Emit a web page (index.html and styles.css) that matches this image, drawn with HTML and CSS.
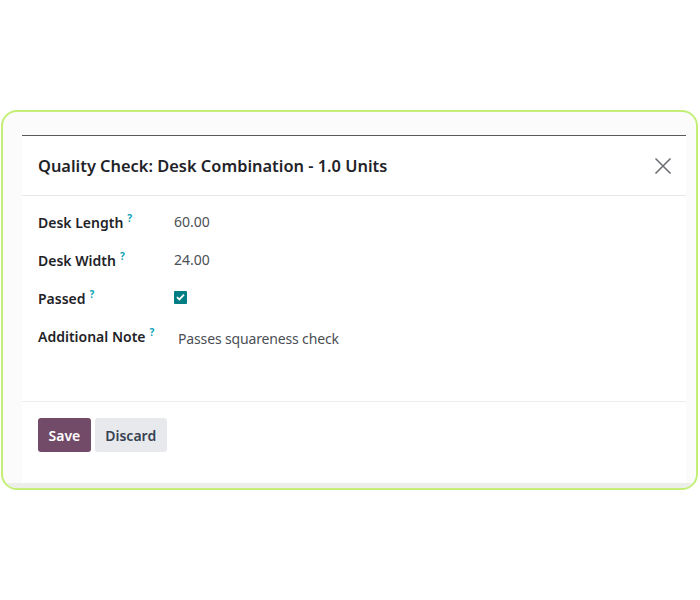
FILE: index.html
```html
<!DOCTYPE html>
<html lang="en">
<head>
    <meta charset="UTF-8">
    <title>Quality Check</title>
    <link rel="stylesheet" href="styles.css">
</head>
<body>

    <div class="frame">
        <div class="modal">

            <!-- Header -->
            <div class="modal-header">
                <h4 class="modal-title">Quality Check: Desk Combination - 1.0 Units</h4>
                <button class="btn-close" aria-label="Close">
                    <svg width="18" height="18" viewBox="0 0 18 18">
                        <path d="M1.5 1.5 L16.5 16.5 M16.5 1.5 L1.5 16.5" stroke="#6c6f73" stroke-width="1.6" fill="none"/>
                    </svg>
                </button>
            </div>

            <!-- Body -->
            <div class="modal-body">
                <div class="field-row">
                    <label class="field-label">Desk Length<sup>?</sup></label>
                    <span class="field-value">60.00</span>
                </div>
                <div class="field-row">
                    <label class="field-label">Desk Width<sup>?</sup></label>
                    <span class="field-value">24.00</span>
                </div>
                <div class="field-row">
                    <label class="field-label">Passed<sup>?</sup></label>
                    <span class="field-value">
                        <span class="checkbox">
                            <svg width="9" height="8" viewBox="0 0 9 8">
                                <path d="M1 4.2 L3.4 6.4 L8 1.6" stroke="#fff" stroke-width="1.8" fill="none"/>
                            </svg>
                        </span>
                    </span>
                </div>
                <div class="field-row">
                    <label class="field-label">Additional Note<sup>?</sup></label>
                    <span class="field-value note">Passes squareness check</span>
                </div>
            </div>

            <!-- Footer -->
            <div class="modal-footer">
                <button class="btn btn-primary">Save</button>
                <button class="btn btn-secondary">Discard</button>
            </div>

        </div>
        <div class="frame-bottom"></div>
    </div>

</body>
</html>
```

FILE: styles.css
```css
body {
    margin: 0;
    padding: 0;
    background-color: #ffffff;
    font-family: "Noto Sans", "Open Sans", sans-serif;
    color: #374151;
}

/* Green rounded frame around the dialog */
.frame {
    box-sizing: border-box;
    margin: 110px 2px 0 1px;
    height: 380px;
    border: 2px solid #c4ee78;
    border-radius: 16px;
    background-color: #fbfbfb;
    padding: 23px 10px 0 19px;
    display: flex;
    flex-direction: column;
    overflow: hidden;
}

.frame-bottom {
    margin: 0 -10px 0 -19px;
    height: 5px;
    background-color: #eceeea;
}

/* Dialog */
.modal {
    flex: 1;
    background-color: #ffffff;
    border-top: 1px solid #5a5a5a;
    display: flex;
    flex-direction: column;
}

.modal-header {
    display: flex;
    align-items: center;
    justify-content: space-between;
    height: 59px;
    padding: 0 14px 0 16px;
    border-bottom: 1px solid #e7e7e7;
}

.modal-title {
    margin: 0;
    font-size: 16.4px;
    font-weight: 600;
    color: #1f2328;
}

.btn-close {
    border: none;
    background: none;
    padding: 0;
    cursor: pointer;
    display: flex;
}

.modal-body {
    height: 199px;
    padding: 6px 16px 0 16px;
    border-bottom: 1px solid #ececec;
}

.field-row {
    display: grid;
    grid-template-columns: 136px 1fr;
    align-items: center;
    height: 38px;
}

.field-label {
    font-size: 14px;
    font-weight: 600;
    color: #1f2328;
}

.field-label sup {
    color: #0ba3b5;
    font-size: 10px;
    font-weight: 700;
    margin-left: 4px;
}

.field-value {
    font-size: 14px;
    color: #4b4f55;
    display: flex;
    align-items: center;
}

.field-value.note {
    padding-left: 4px;
    padding-top: 6px;
    letter-spacing: -0.15px;
}

.checkbox {
    width: 13px;
    height: 13px;
    background-color: #017e84;
    border-radius: 1px;
    display: flex;
    align-items: center;
    justify-content: center;
}

.modal-footer {
    display: flex;
    gap: 4px;
    padding: 16px;
}

.btn {
    border: none;
    border-radius: 3px;
    font-family: inherit;
    font-size: 14px;
    font-weight: 600;
    padding: 0 10.5px;
    height: 34px;
    cursor: pointer;
}

.btn-primary {
    background-color: #714b67;
    color: #ffffff;
}

.btn-secondary {
    background-color: #e7e9ed;
    color: #374151;
}
```
